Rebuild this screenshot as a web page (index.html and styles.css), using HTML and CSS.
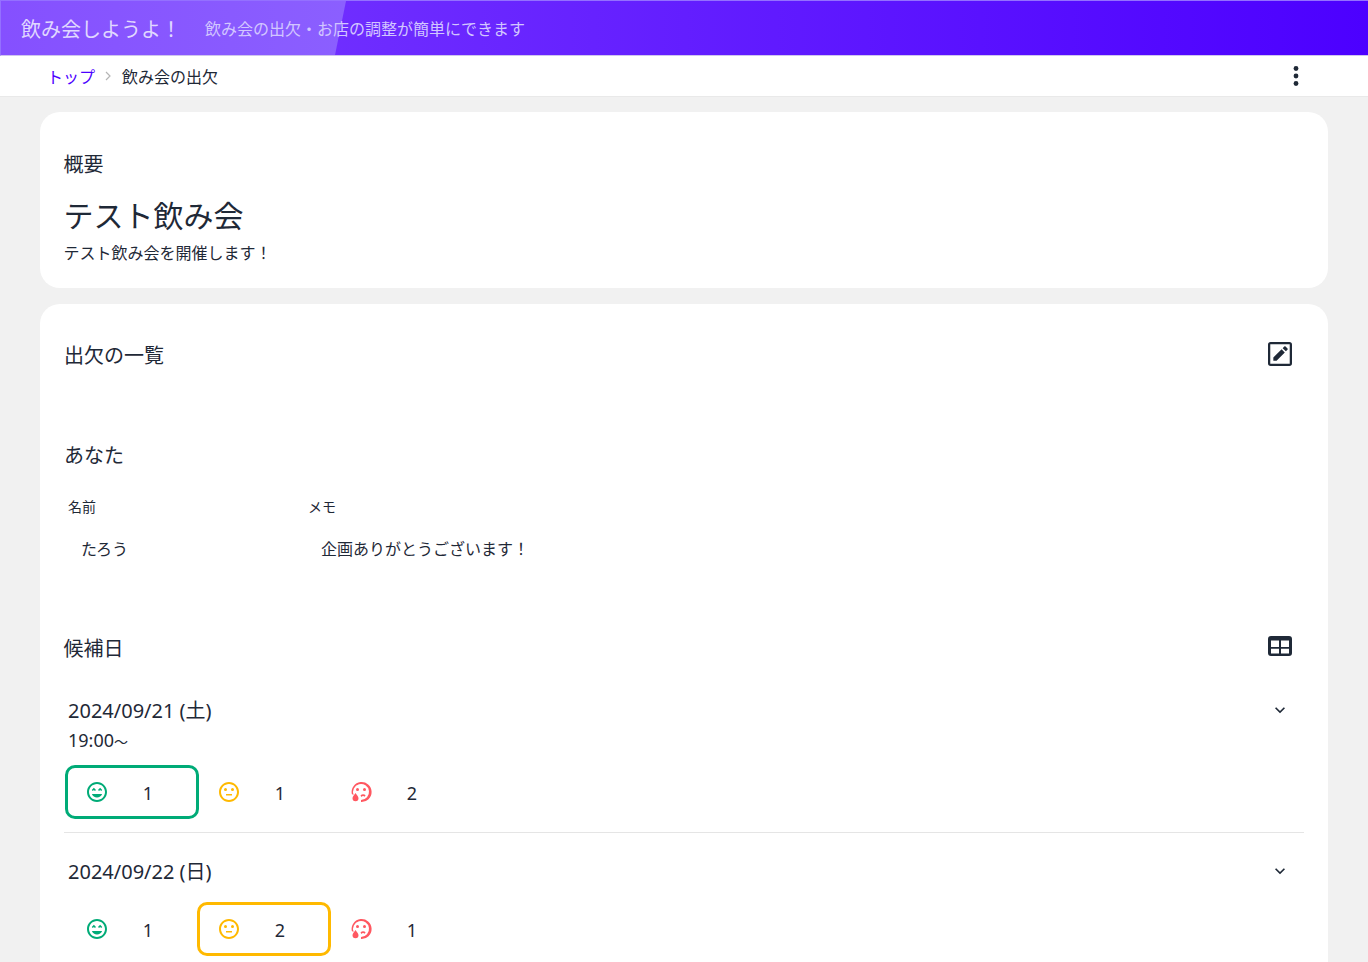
FILE: index.html
```html
<!DOCTYPE html>
<html lang="ja">
<head>
<meta charset="utf-8">
<title>飲み会の出欠</title>
<link rel="stylesheet" href="styles.css">
</head>
<body>
<header class="topbar">
  <span class="brand">飲み会しようよ！</span>
  <span class="tagline">飲み会の出欠・お店の調整が簡単にできます</span>
</header>
<nav class="crumbs">
  <a class="crumb-link" href="#">トップ</a>
  <svg class="crumb-sep" viewBox="0 0 12 12"><path d="M4 2l4 4-4 4" fill="none" stroke="#b5b5b5" stroke-width="1.2"/></svg>
  <span class="crumb-current">飲み会の出欠</span>
  <svg class="kebab" viewBox="0 0 24 24"><circle cx="12" cy="4.500" r="2.400"/><circle cx="12" cy="12" r="2.400"/><circle cx="12" cy="19.500" r="2.400"/></svg>
</nav>
<main class="page">
  <section class="card summary">
    <h2 class="label">概要</h2>
    <h1 class="event">テスト飲み会</h1>
    <p class="desc">テスト飲み会を開催します！</p>
  </section>
  <section class="card list">
    <div class="head head-list">
      <h2 class="label">出欠の一覧</h2>
      <svg class="icon" viewBox="3 3 18 18"><path d="M3 5a2 2 0 0 1 2-2h14a2 2 0 0 1 2 2v14a2 2 0 0 1-2 2H5a2 2 0 0 1-2-2zM4.700 4.700v14.600h14.600V4.700zM7 17v-2.400l6.200-6.200 2.400 2.400-6.200 6.200zM14 7.600l1.200-1.200a.7.7 0 0 1 1 0l1.400 1.400a.7.7 0 0 1 0 1l-1.200 1.200z" fill-rule="evenodd"/></svg>
    </div>
    <h2 class="label you">あなた</h2>
    <div class="fields">
      <div class="field field-name"><div class="field-label">名前</div><div class="field-value">たろう</div></div>
      <div class="field"><div class="field-label">メモ</div><div class="field-value">企画ありがとうございます！</div></div>
    </div>
    <div class="head head-dates">
      <h2 class="label">候補日</h2>
      <svg class="icon icon-table" viewBox="0 0 24 20"><path fill-rule="evenodd" d="M3 0h18a3 3 0 0 1 3 3v14a3 3 0 0 1-3 3H3a3 3 0 0 1-3-3V3a3 3 0 0 1 3-3zM3 4.500V11h8V4.500zM13 4.500V11h8V4.500zM3 12.800V17.500h8v-4.700zM13 12.800V17.500h8v-4.700z"/></svg>
    </div>

    <article class="date date-first">
      <div class="date-top">
        <div class="date-title">2024/09/21 (土)</div>
        <svg class="chev" viewBox="0 0 24 24"><path d="M7.410 8.590 12 13.170l4.590-4.580L18 10l-6 6-6-6z"/></svg>
      </div>
      <div class="date-time">19:00<span class="tilde">～</span></div>
      <div class="votes">
        <div class="vote selected-ok"><svg class="face ok" viewBox="0 0 24 24"><use href="#f-ok"/></svg><span class="count">1</span></div>
        <div class="vote"><svg class="face mid" viewBox="0 0 24 24"><use href="#f-mid"/></svg><span class="count">1</span></div>
        <div class="vote"><svg class="face ng" viewBox="0 0 24 24"><use href="#f-ng"/></svg><span class="count">2</span></div>
      </div>
    </article>
    <article class="date">
      <div class="date-top">
        <div class="date-title">2024/09/22 (日)</div>
        <svg class="chev" viewBox="0 0 24 24"><path d="M7.410 8.590 12 13.170l4.590-4.580L18 10l-6 6-6-6z"/></svg>
      </div>
      <div class="votes">
        <div class="vote"><svg class="face ok" viewBox="0 0 24 24"><use href="#f-ok"/></svg><span class="count">1</span></div>
        <div class="vote selected-mid"><svg class="face mid" viewBox="0 0 24 24"><use href="#f-mid"/></svg><span class="count">2</span></div>
        <div class="vote"><svg class="face ng" viewBox="0 0 24 24"><use href="#f-ng"/></svg><span class="count">1</span></div>
      </div>
    </article>
  </section>
</main>
<svg class="defs" width="0" height="0">
  <defs>
    <g id="f-ok"><path d="M11.990 2C6.470 2 2 6.480 2 12s4.470 10 9.990 10C17.520 22 22 17.520 22 12S17.520 2 11.990 2zM12 20c-4.420 0-8-3.580-8-8s3.580-8 8-8 8 3.580 8 8-3.580 8-8 8zm1-10.060L14.060 11l1.060-1.060L16.180 11l1.060-1.060-2.120-2.120zm-4.120 0L9.940 11 11 9.940 8.880 7.820 6.760 9.940 7.820 11zM12 17.500c2.330 0 4.310-1.460 5.110-3.500H6.890c.8 2.040 2.780 3.500 5.110 3.500z"/></g>
    <g id="f-mid"><path d="M9 14h6v1.500H9z"/><circle cx="15.500" cy="9.500" r="1.500"/><circle cx="8.500" cy="9.500" r="1.500"/><path d="M11.990 2C6.470 2 2 6.480 2 12s4.470 10 9.990 10C17.520 22 22 17.520 22 12S17.520 2 11.990 2zM12 20c-4.420 0-8-3.580-8-8s3.580-8 8-8 8 3.580 8 8-3.580 8-8 8z"/></g>
    <g id="f-ng"><path d="M2.800 14A10 10 0 1 1 12 22v-2a8 8 0 1 0-7.400-5z"/><path d="M6.500 13c1.400 2 3 3.700 3 5.300a3 3 0 0 1-6 0c0-1.600 1.600-3.300 3-5.300z"/><circle cx="8.500" cy="9.500" r="1.500"/><circle cx="15.500" cy="9.500" r="1.500"/><path d="M11.500 15.500c1.300-1.500 3.600-1.600 5.100-.2l-1 1.400c-1-.9-2.300-.8-3.200.2z"/></g>
  </defs>
</svg>
</body>
</html>
```
FILE: styles.css
```css
* { box-sizing: border-box; }
html, body { margin: 0; padding: 0; }
body {
  height: 962px;
  overflow: hidden;
  background: #f1f1f1;
  color: #1f2937;
  font-family: "Noto Sans", "Noto Sans CJK JP", sans-serif;
}
h1, h2, p { margin: 0; font-weight: 400; }

.topbar {
  position: relative;
  height: 56px;
  display: flex;
  align-items: center;
  gap: 24px;
  padding: 0 20px;
  background: linear-gradient(90deg, #7a3cff 0%, #4c00ff 100%);
  border-top: 1px solid #9470ff;
  border-left: 1px solid #9470ff;
  border-bottom: 1px solid #cfc4ee;
  overflow: hidden;
}
.topbar::before {
  content: "";
  position: absolute;
  inset: 0 auto 0 0;
  width: 345px;
  background: linear-gradient(90deg, #8550ff 0%, #8b5fff 100%);
  clip-path: polygon(0 0, 100% 0, 334px 100%, 0 100%);
}
.brand {
  position: relative;
  font-size: 20px;
  color: #e0d8ff;
}
.tagline {
  position: relative;
  font-size: 16px;
  color: #d2c6ff;
}

.crumbs {
  height: 41px;
  display: flex;
  align-items: center;
  padding: 0 60px 0 47px;
  background: #fff;
  border-bottom: 1px solid #e9e9e9;
  font-size: 16px;
}
.crumb-link { color: #4c00ff; text-decoration: none; }
.crumb-sep { width: 12px; height: 12px; margin: 0 8px 0 7px; }
.kebab { width: 24px; height: 24px; margin-left: auto; fill: #1f2937; }

.page { padding: 15px 40px 0; }
.card {
  background: #fff;
  border-radius: 20px;
  padding: 24px;
}
.summary { height: 176px; margin-bottom: 16px; padding: 41px 24px 24px 23.500px; }
.label { font-size: 20px; line-height: 24px; }
.event { font-size: 30px; line-height: 36px; margin-top: 21px; }
.desc { font-size: 16px; line-height: 24px; margin-top: 7px; }

.list { padding: 38px 24px 24px 23px; }
.head { display: flex; align-items: center; justify-content: space-between; padding-right: 12px; }
.head-list { padding-left: 1px; height: 28px; }
.icon { width: 24px; height: 24px; fill: #1f2937; flex: none; margin-top: -4px; }
.icon-table { height: 20px; margin-top: -6px; }
.you { margin-top: 74px; padding-left: 1px; }
.fields { display: flex; margin-top: 29px; padding-left: 5px; }
.field-name { width: 240px; }
.field-label { font-size: 14px; line-height: 20px; }
.field-value { font-size: 16px; line-height: 24px; margin-top: 20px; padding-left: 13px; }
.head-dates { margin-top: 74px; height: 28px; padding-left: 0.500px; }

.date { margin-left: 1px; }
.date-first { margin-top: 34px; border-bottom: 1px solid #e5e5e5; padding-bottom: 13px; }
.date-top { display: flex; justify-content: space-between; align-items: center; padding: 0 12px 0 4px; height: 28px; }
.date-first + .date { padding-top: 25px; }
.date-title { font-size: 20px; line-height: 28px; }
.chev { width: 20px; height: 20px; fill: #1f2937; margin-right: 2px; margin-top: -2px; }
.date-time { font-size: 18px; line-height: 24px; margin-top: 3px; padding-left: 4px; }
.tilde { font-size: 14px; }
.votes { display: flex; margin-top: 16px; padding-left: 1px; }
.date-first .votes { margin-top: 11px; }
.vote {
  width: 134px;
  height: 54px;
  margin-right: -2px;
  display: flex;
  align-items: center;
  padding-left: 17px;
  border: 3px solid transparent;
  border-radius: 10px;
  font-size: 18px;
}
.selected-ok { border-color: #00ab77; }
.selected-mid { border-color: #ffb900; }
.face { width: 24px; height: 24px; flex: none; }
.ok { fill: #00ab77; }
.mid { fill: #ffb900; }
.ng { fill: #ff5861; }
.count { margin: 1px 0 0 31px; width: 16px; text-align: center; }
.defs { position: absolute; }
```
